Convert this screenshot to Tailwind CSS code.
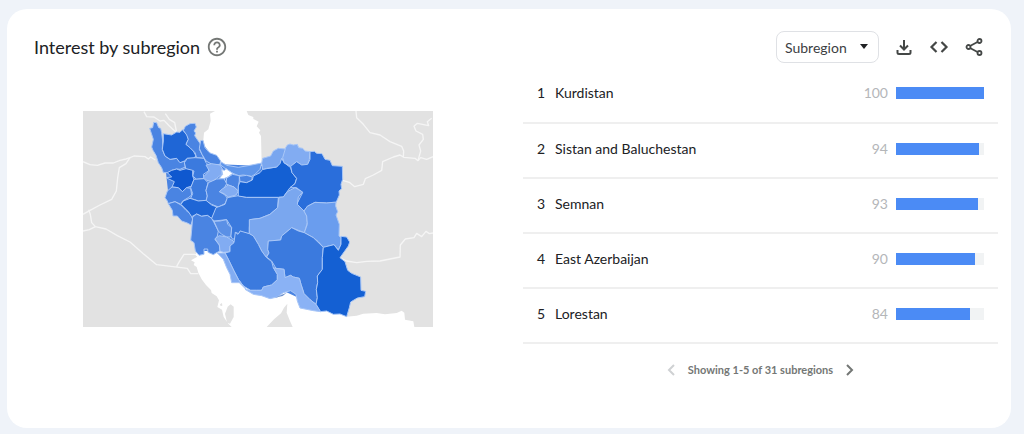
<!DOCTYPE html>
<html lang="en">
<head>
    <meta charset="UTF-8">
    <meta name="viewport" content="width=device-width, initial-scale=1.0">
    <title>Interest by subregion</title>
    <script src="https://cdn.jsdelivr.net/npm/@tailwindcss/browser@4"></script>
</head>
<body class="bg-[#eff3f9] min-h-screen flex flex-col pt-[9px] pb-[6px] pl-[7px] pr-[13px] font-['Lato','Open_Sans',sans-serif] text-[#202124]">

    <main class="bg-white rounded-[20px] grow">

        <!-- Header -->
        <header class="flex items-center justify-between pt-[22px] pl-[27px] pr-[27px]">
            <div class="flex items-center gap-1.5">
                <h1 class="text-[18px] leading-6">Interest by subregion</h1>
                <button type="button" aria-label="Help" class="text-[#747775]">
                    <svg class="size-[22px]" viewBox="0 0 24 24" fill="currentColor">
                        <path d="M11 18h2v-2h-2v2zm1-16C6.48 2 2 6.48 2 12s4.48 10 10 10 10-4.48 10-10S17.52 2 12 2zm0 18c-4.41 0-8-3.59-8-8s3.59-8 8-8 8 3.59 8 8-3.59 8-8 8zm0-14c-2.21 0-4 1.79-4 4h2c0-1.1.9-2 2-2s2 .9 2 2c0 2-3 1.75-3 5h2c0-2.25 3-2.5 3-5 0-2.21-1.79-4-4-4z"/>
                    </svg>
                </button>
            </div>
            <div class="flex items-center gap-[15px] text-[#444746]">
                <div class="relative">
                    <select aria-label="Resolution" class="appearance-none h-8 w-[103px] border border-[#dfe1e5] rounded-lg pl-2 text-[14px] text-[#3c4043] bg-white">
                        <option>Subregion</option>
                        <option>City</option>
                    </select>
                    <svg class="absolute right-[11px] top-[13px] w-2 h-[5px] pointer-events-none" viewBox="0 0 8 5" fill="#202124"><path d="M0 0h8L4 5z"/></svg>
                </div>
                <button type="button" aria-label="Download">
                    <svg class="size-5" viewBox="0 0 20 20" fill="none" stroke="currentColor" stroke-width="2">
                        <path d="M10 3v9M6 8.500l4 4 4-4M3.500 13v2.500q0 1.500 1.500 1.500h10q1.500 0 1.500-1.500V13"/>
                    </svg>
                </button>
                <button type="button" aria-label="Embed">
                    <svg class="size-5" viewBox="0 0 20 20" fill="none" stroke="currentColor" stroke-width="2.200">
                        <path d="M7.500 5l-5 5 5 5M12.500 5l5 5-5 5"/>
                    </svg>
                </button>
                <button type="button" aria-label="Share">
                    <svg class="size-5" viewBox="0 0 20 20" fill="none" stroke="currentColor" stroke-width="1.800">
                        <path d="M6 9l7.500-4M6 11l7.500 4"/>
                        <circle cx="4.500" cy="10" r="2"/>
                        <circle cx="15.500" cy="4" r="2"/>
                        <circle cx="15.500" cy="16" r="2"/>
                    </svg>
                </button>
            </div>
        </header>

        <div class="grid grid-cols-2 mt-[5px]">

            <!-- Map -->
            <div class="flex justify-center pt-[43px]">
                <svg class="w-[350px] max-w-full h-auto self-start" viewBox="9 10 1050 648" role="img" aria-label="Map of Iran by subregion" stroke-linejoin="round">
                    <rect x="9" y="10" width="1050" height="648" fill="#e2e2e2"/>

                    <!-- seas -->
                    <g fill="#fff">
                        <path d="M405 10L390 18 392 40 385 65 372 75 370 98 375 115 388 135 410 145 422 162 440 175 475 180 510 175 545 168 543 85 537 75 541 68 530 56 536 42 520 34 520 28 505 22 500 10z"/>
                        <path d="M355 430L345 441 352 447 333 458 344 464 341 472 350 478 355 495 365 515 378 532 393 547 395 556 410 566 417 578 412 598 426 606 431 628 445 648 455 658H1003L1000 641 975 636 973 615 965 609 950 616 915 620 890 616 850 618 830 624 800 627 770 560 500 400 380 418z"/>
                    </g>
                    <g fill="#e2e2e2">
                        <path d="M443 597L452 590 461 597 461 628 450 648 441 645 435 618z"/>
                        <path d="M420 590l6 -4 1 8 -5 1z"/>
                        <path d="M560 658L582 635 603 617 612 600 622 588 620 615 630 640 638 658z"/>
                    </g>

                    <!-- neighbouring borders -->
                    <g fill="none" stroke="#f5f5f5" stroke-width="4">
                        <path d="M9 162L30 171 52 173 75 166 100 166 120 158 138 154 150 150 162 145 195 147 205 154 212 148 226 157"/>
                        <path d="M150 150L138 168 118 180 113 210 109 250 95 275 60 292 30 308 9 320"/>
                        <path d="M26 306L31 320 35 345 46 357 28 366 9 370M46 357L78 364 112 384 150 403 190 438 230 471 322 482 332 498 355 498M290 476L298 462 312 440 345 440"/>
                        <path d="M192 12L200 27 222 28 240 40 252 38 268 55 290 75M256 18L268 35 284 45 290 75"/>
                        <path d="M828 10L830 30 850 50 870 75 900 82 930 102 965 116 971 130 970 148"/>
                        <path d="M788 218L808 224 824 237 850 230 856 213 880 202 905 188 908 162 940 148 960 142 972 149 1005 152 1014 159 1022 150 1040 155 1059 147"/>
                        <path d="M1055 32L1042 42 1046 54 1012 47 1002 56 1008 70 1028 80 1030 95 1017 112 1022 130 1014 159"/>
                        <path d="M778 450L800 460 830 465 860 461 900 460 960 448 961 412 976 394 1002 390 1010 377 1025 387 1038 371 1048 378 1059 376"/>
                    </g>

                    <!-- provinces -->
                    <path fill="#4a84e2" d="M250 120L368 110 420 170 545 175 600 170 700 150 760 200 760 400 770 590 720 600 600 545 500 540 440 430 360 430 345 340 275 300 265 260z"/>
                    <g stroke="#a9c7f7" stroke-width="3">
                        <path fill="#4a84e2" d="M209 62L218 60 221 44 230 45 236 60 242 62 245 75 248 100 247 125 255 145 270 155 290 152 300 165 313 160 316 178 300 185 290 184 275 188 268 195 250 195 245 180 235 165 228 143 219 128 215 118 220 95z"/>
                        <path fill="#1f66d6" d="M250 78L275 82 290 73 300 74 307 66 322 82 325 95 318 110 330 120 340 130 348 145 340 152 322 152 313 160 300 165 290 152 270 155 255 145 247 125 250 100z"/>
                        <path fill="#4a84e2" d="M310 68L316 56 330 48 345 47 349 58 342 70 347 76 344 84 355 100 362 110 358 125 366 140 372 152 350 150 345 135 330 120 318 110 325 95 320 82z"/>
                        <path fill="#4a84e2" d="M362 99L369 98 375 120 388 135 410 143 422 160 420 170 400 172 378 160 366 140 358 122z"/>
                        <path fill="#3b7ade" d="M322 152L345 150 372 152 378 165 388 175 385 190 370 200 372 212 350 215 338 205 342 190 318 185 313 165z"/>
                        <path fill="#0f58cf" d="M258 210L275 208 262 195 275 188 290 184 300 188 318 183 338 188 338 205 342 215 335 235 320 240 307 252 295 240 276 238 283 222z"/>
                        <path fill="#4a84e2" d="M276 238L295 240 307 252 320 240 332 242 335 262 325 270 308 280 303 290 285 282 265 288 262 280 255 270 262 250z"/>
                        <path fill="#3b7ade" d="M342 215L372 213 384 225 378 248 382 265 378 280 355 280 332 272 338 258 332 240z"/>
                        <path fill="#5f96ea" d="M422 162L440 173 475 179 510 173 545 166 540 185 525 200 515 206 490 202 475 204 455 195 435 182 422 172z"/>
                        <path fill="#82acf2" d="M378 172L395 168 420 172 428 185 425 200 410 212 395 222 380 218 370 208 388 190z"/>
                        <path fill="#4a84e2" d="M458 200L478 204 478 220 475 235 475 250 462 238 445 232 438 228 440 211z"/>
                        <path fill="#4a84e2" d="M478 206L500 203 517 208 515 218 500 225 480 222z"/>
                        <path fill="#4a84e2" d="M385 225L410 214 432 213 440 228 432 242 418 252 435 262 442 272 435 288 415 298 395 290 378 280 382 265 378 248z"/>
                        <path fill="#fff" d="M425 186L434 188 438 183 458 197 445 207 432 213 418 212 428 200z"/>
                        <path fill="#82acf2" d="M428 243L445 232 462 238 475 250 468 262 445 268 432 258 418 252z"/>
                        <path fill="#4a84e2" d="M265 288L285 282 303 292 318 308 332 320 338 335 333 352 322 346 305 340 292 325 279 325 277 308z"/>
                        <path fill="#1f66d6" d="M303 290L310 280 330 272 355 280 378 278 395 292 411 298 403 318 395 332 382 323 365 326 350 319 335 327 325 312z"/>
                        <path fill="#4a84e2" d="M338 328L350 319 365 326 382 323 395 332 402 345 415 370 412 385 405 396 418 412 420 430 408 436 400 441 384 434 383 424 372 424 372 440 357 443 346 430 342 405 332 398 335 368z"/>
                        <path fill="#3b7ade" d="M395 332L408 300 435 290 442 270 475 264 500 269 595 269 593 300 570 320 540 332 510 336 508 360 508 378 490 376 481 370 476 378 466 374 470 390 458 395 452 385 455 360 440 336 402 340z"/>
                        <path fill="#5b90e6" d="M402 341L420 340 440 336 443 350 455 360 452 388 440 388 425 380 415 370z"/>
                        <path fill="#82acf2" d="M405 393L418 384 440 388 460 400 462 408 450 415 448 432 430 434 420 430 418 412z"/>
                        <path fill="#1460d3" d="M475 265L475 235 480 222 500 225 517 217 520 205 540 195 548 185 590 178 600 160 605 152 612 165 632 180 636 195 650 212 645 228 630 240 610 268 595 269 500 269z"/>
                        <path fill="#79a6ef" d="M545 167L548 152 572 145 580 130 595 122 617 124 620 132 611 145 612 160 605 152 600 168 590 178 560 182 548 185z"/>
                        <path fill="#82acf2" d="M617 120L622 112 630 109 640 112 652 110 656 120 668 122 675 130 690 132 688 155 683 170 665 172 650 162 632 176 612 165 608 150z"/>
                        <path fill="#2a6edb" d="M690 132L703 131 710 137 726 138 735 155 750 158 757 174 787 176 788 215 783 230 785 243 777 250 778 262 768 285 740 286 705 284 682 296 672 310 655 300 650 290 668 255 650 240 630 240 645 228 650 212 636 195 632 176 650 162 665 172 683 170 690 155z"/>
                        <path fill="#7aa7ef" d="M593 300L597 269 610 268 622 252 645 240 668 253 655 268 652 290 672 310 680 325 682 345 673 375 635 360 605 385 602 397 565 400 563 425 567 436 558 448 545 430 535 410 520 385 508 378 508 336 540 332 570 320z"/>
                        <path fill="#6a9dee" d="M672 310L682 296 705 284 740 286 768 283 767 295 773 312 768 322 778 350 777 385 784 390 782 412 775 426 762 411 730 419 715 402 700 390 673 375 682 350 680 325z"/>
                        <path fill="#3b7ade" d="M466 374L474 380 481 370 508 378 520 385 535 410 545 430 558 448 575 462 580 480 592 500 592 516 575 532 550 538 545 548 530 548 512 548 490 535 475 515 462 490 445 455 435 436 450 432 450 415 462 405z"/>
                        <path fill="#3b7ade" d="M565 400L602 397 605 385 635 360 655 370 673 375 700 390 730 419 727 450 727 485 712 505 713 525 709 545 712 570 708 590 690 576 672 558 663 530 658 512 640 508 632 503 615 510 612 485 588 482 575 460 560 448 567 436 563 425z"/>
                        <path fill="#1460d3" d="M730 419L762 411 775 428 783 410 783 386 800 388 809 403 805 415 780 450 795 462 803 488 815 497 842 508 843 548 857 551 854 567 832 571 812 583 808 600 800 627 780 619 760 620 740 610 720 612 708 590 712 570 709 545 713 525 712 505 727 485 727 450z"/>
                        <path fill="#8ab2f5" d="M592 500L580 480 588 482 612 485 615 510 632 503 640 508 658 512 663 530 672 558 690 576 708 590 722 612 700 609 660 601 652 580 648 560 632 549 610 555 592 568 570 573 545 564 520 560 495 545 512 548 530 548 545 548 550 538 575 532 592 516z"/>
                        <path fill="#82acf2" d="M412 436L435 436 445 455 462 490 475 515 490 535 500 547 478 525 455 525 450 500 440 480 430 455z"/>
                    </g>
                    <path fill="#6f93cf" d="M585 570L605 561 620 555 608 565z"/>
                </svg>
            </div>

            <!-- Ranking -->
            <div class="pl-[14px] pr-[13px]">
                <table class="w-full text-[14px] leading-5">
                    <tbody>
                        <tr class="h-[55px] border-b-2 border-[#efefef]">
                            <td class="w-8 pl-[14px] pb-1">1</td>
                            <td class="pb-1">Kurdistan</td>
                            <td class="text-right text-[#b4b6b9] pr-2 pb-1">100</td>
                            <td class="w-[102px] pr-[14px] pb-1"><div class="h-3 bg-[#f1f3f4]"><div class="h-3 bg-[#4b8bf5]" style="width: 100%"></div></div></td>
                        </tr>
                        <tr class="h-[55px] border-b-2 border-[#efefef]">
                            <td class="pl-[14px] pb-1">2</td>
                            <td class="pb-1">Sistan and Baluchestan</td>
                            <td class="text-right text-[#b4b6b9] pr-2 pb-1">94</td>
                            <td class="pr-[14px] pb-1"><div class="h-3 bg-[#f1f3f4]"><div class="h-3 bg-[#4b8bf5]" style="width: 94%"></div></div></td>
                        </tr>
                        <tr class="h-[55px] border-b-2 border-[#efefef]">
                            <td class="pl-[14px] pb-1">3</td>
                            <td class="pb-1">Semnan</td>
                            <td class="text-right text-[#b4b6b9] pr-2 pb-1">93</td>
                            <td class="pr-[14px] pb-1"><div class="h-3 bg-[#f1f3f4]"><div class="h-3 bg-[#4b8bf5]" style="width: 93%"></div></div></td>
                        </tr>
                        <tr class="h-[55px] border-b-2 border-[#efefef]">
                            <td class="pl-[14px] pb-1">4</td>
                            <td class="pb-1">East Azerbaijan</td>
                            <td class="text-right text-[#b4b6b9] pr-2 pb-1">90</td>
                            <td class="pr-[14px] pb-1"><div class="h-3 bg-[#f1f3f4]"><div class="h-3 bg-[#4b8bf5]" style="width: 90%"></div></div></td>
                        </tr>
                        <tr class="h-[55px] border-b-2 border-[#efefef]">
                            <td class="pl-[14px] pb-1">5</td>
                            <td class="pb-1">Lorestan</td>
                            <td class="text-right text-[#b4b6b9] pr-2 pb-1">84</td>
                            <td class="pr-[14px] pb-1"><div class="h-3 bg-[#f1f3f4]"><div class="h-3 bg-[#4b8bf5]" style="width: 84%"></div></div></td>
                        </tr>
                    </tbody>
                </table>

                <nav class="flex items-center justify-center gap-2.5 mt-4 text-[11px] leading-5 font-bold text-[#747775]">
                    <button type="button" aria-label="Previous" disabled class="text-[#cfd1d3]">
                        <svg class="w-3 h-3" viewBox="0 0 12 12" fill="none" stroke="currentColor" stroke-width="2"><path d="M8 1L3 6l5 5"/></svg>
                    </button>
                    <span>Showing 1-5 of 31 subregions</span>
                    <button type="button" aria-label="Next">
                        <svg class="w-3 h-3" viewBox="0 0 12 12" fill="none" stroke="currentColor" stroke-width="2"><path d="M4 1l5 5-5 5"/></svg>
                    </button>
                </nav>
            </div>
        </div>
    </main>

</body>
</html>
